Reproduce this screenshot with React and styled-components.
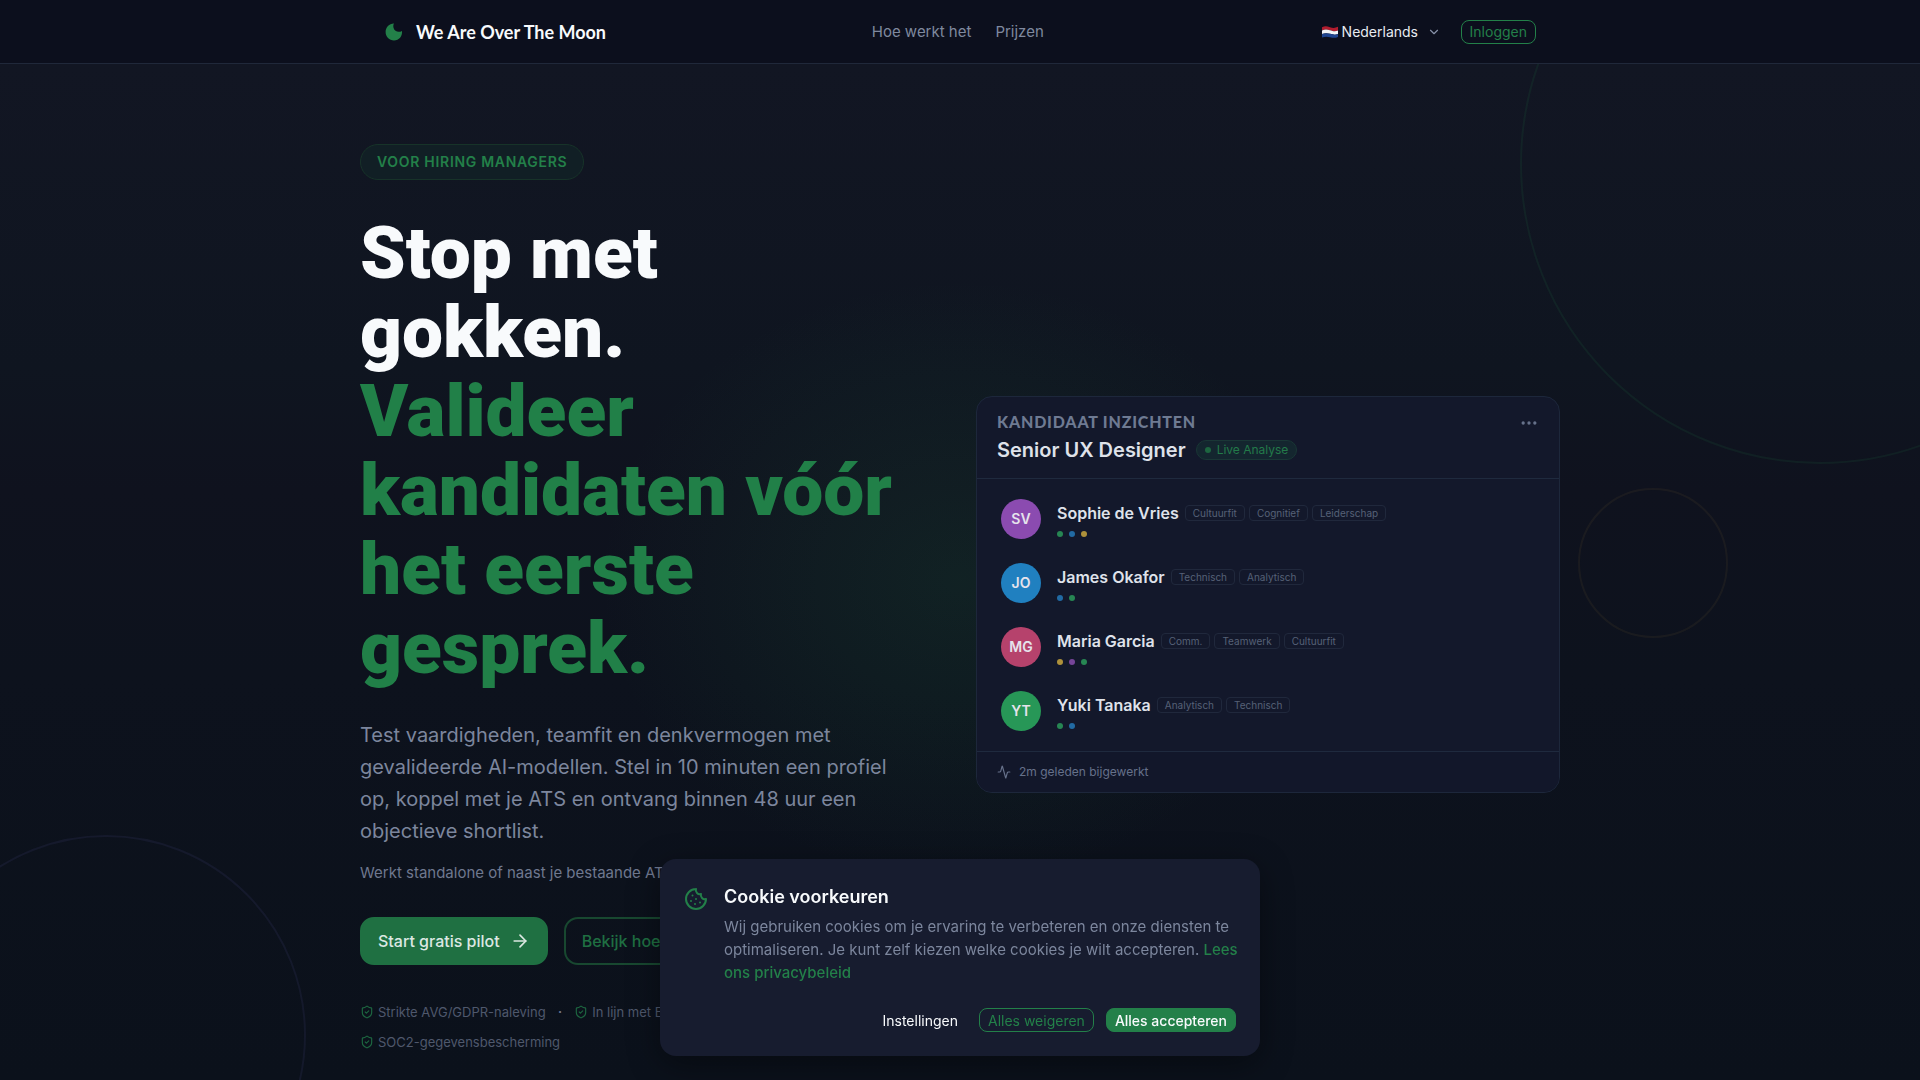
import React from 'react';
import styled, { createGlobalStyle } from 'styled-components';
import { Activity, ArrowRight, ChevronDown, Cookie, Ellipsis, ShieldCheck } from 'lucide-react';

const candidates = [
  {
    initials: 'SV',
    name: 'Sophie de Vries',
    color: '#8b4bb0',
    tags: ['Cultuurfit', 'Cognitief', 'Leiderschap'],
    dots: ['#278653', '#216aa3', '#ae913b'],
  },
  {
    initials: 'JO',
    name: 'James Okafor',
    color: '#2080c0',
    tags: ['Technisch', 'Analytisch'],
    dots: ['#216aa3', '#278653'],
  },
  {
    initials: 'MG',
    name: 'Maria Garcia',
    color: '#b6426c',
    tags: ['Comm.', 'Teamwerk', 'Cultuurfit'],
    dots: ['#ae913b', '#764599', '#278653'],
  },
  {
    initials: 'YT',
    name: 'Yuki Tanaka',
    color: '#279757',
    tags: ['Analytisch', 'Technisch'],
    dots: ['#278653', '#216aa3'],
  },
];

const App = () => {
  return (
    <>
      <GlobalStyle />
      <Header>
        <HeaderInner>
          <Brand href="#">
            <svg width="20" height="20" viewBox="0 0 20 20" aria-hidden="true">
              <path
                d="M10 1.6C9.2 3 9.1 4.700 9.700 6.200C10.500 9.300 14.500 11 18 8.900C18.700 13.900 15 18.400 10 18.400C5.300 18.400 1.600 14.700 1.600 10C1.600 5.300 5.300 1.500 10 1.600Z"
                fill="#238049"
              />
            </svg>
            We Are Over The Moon
          </Brand>
          <Nav>
            <NavLink href="#hoe">Hoe werkt het</NavLink>
            <NavLink href="#prijzen">Prijzen</NavLink>
          </Nav>
          <HeaderActions>
            <Language>
              <Flag />
              <LanguageSelect aria-label="Taal" defaultValue="nl">
                <option value="nl">Nederlands</option>
              </LanguageSelect>
              <ChevronDown size={14} color="#8791a8" />
            </Language>
            <SmallButton $variant="outline">Inloggen</SmallButton>
          </HeaderActions>
        </HeaderInner>
      </Header>

      <Hero>
        <Glow />
        <RingTop />
        <RingMiddle />
        <RingBottom />
        <HeroGrid>
          <Intro>
            <Badge>VOOR HIRING MANAGERS</Badge>
            <Title>
              Stop met
              <br />
              gokken.
              <Highlight>
                Valideer
                <br />
                kandidaten vóór
                <br />
                het eerste
                <br />
                gesprek.
              </Highlight>
            </Title>
            <Lead>
              Test vaardigheden, teamfit en denkvermogen met gevalideerde AI-modellen. Stel in 10
              minuten een profiel op, koppel met je ATS en ontvang binnen 48 uur een objectieve
              shortlist.
            </Lead>
            <Note>Werkt standalone of naast je bestaande ATS.</Note>
            <Actions>
              <BigButton $primary>
                Start gratis pilot
                <ArrowRight size={20} />
              </BigButton>
              <BigButton>Bekijk hoe het werkt</BigButton>
            </Actions>
            <TrustList>
              <TrustItem>
                <ShieldCheck size={14} color="#1d6640" />
                Strikte AVG/GDPR-naleving
              </TrustItem>
              <TrustDot>·</TrustDot>
              <TrustItem>
                <ShieldCheck size={14} color="#1d6640" />
                In lijn met EU AI Act
              </TrustItem>
              <TrustItem>
                <ShieldCheck size={14} color="#1d6640" />
                SOC2-gegevensbescherming
              </TrustItem>
            </TrustList>
          </Intro>

          <Card>
            <CardHeader>
              <div>
                <CardLabel>KANDIDAAT INZICHTEN</CardLabel>
                <CardTitleRow>
                  <CardTitle>Senior UX Designer</CardTitle>
                  <LivePill>
                    <Dot $color="#1d6640" />
                    Live Analyse
                  </LivePill>
                </CardTitleRow>
              </div>
              <MoreButton aria-label="Meer opties">
                <Ellipsis size={20} />
              </MoreButton>
            </CardHeader>
            <CandidateList>
              {candidates.map((c) => (
                <Candidate key={c.name}>
                  <Avatar $color={c.color}>{c.initials}</Avatar>
                  <div>
                    <NameRow>
                      <Name>{c.name}</Name>
                      {c.tags.map((tag) => (
                        <Tag key={tag}>{tag}</Tag>
                      ))}
                    </NameRow>
                    <Dots>
                      {c.dots.map((color) => (
                        <Dot key={color} $color={color} />
                      ))}
                    </Dots>
                  </div>
                </Candidate>
              ))}
            </CandidateList>
            <CardFooter>
              <Activity size={14} />
              2m geleden bijgewerkt
            </CardFooter>
          </Card>
        </HeroGrid>
      </Hero>

      <CookieDialog role="dialog" aria-labelledby="cookie-title">
        <CookieBody>
          <Cookie size={24} color="#238049" />
          <div>
            <CookieTitle id="cookie-title">Cookie voorkeuren</CookieTitle>
            <CookieText>
              Wij gebruiken cookies om je ervaring te verbeteren en onze diensten te optimaliseren.
              Je kunt zelf kiezen welke cookies je wilt accepteren.{' '}
              <CookieLink href="#privacy">Lees ons privacybeleid</CookieLink>
            </CookieText>
          </div>
        </CookieBody>
        <CookieActions>
          <SmallButton>Instellingen</SmallButton>
          <SmallButton $variant="outline">Alles weigeren</SmallButton>
          <SmallButton $variant="solid">Alles accepteren</SmallButton>
        </CookieActions>
      </CookieDialog>
    </>
  );
};

const Flag = () => (
  <svg width="16" height="12" viewBox="0 0 16 12" aria-hidden="true">
    <path d="M0 1.200C3-.3 5 .2 8 1.200S13 2.200 16 .8V4.400C13 5.800 11 5 8 4.200S3 3.200 0 4.400Z" fill="#b01c2e" />
    <path d="M0 4.400C3 3.200 5 3.400 8 4.200S13 5.800 16 4.400V8C13 9.200 11 8.600 8 7.800S3 7 0 8Z" fill="#f3f4f6" />
    <path d="M0 8C3 7 5 7 8 7.800S13 9.200 16 8V11C13 12.200 11 12 8 11.200S3 10.400 0 11.600Z" fill="#1f448f" />
  </svg>
);

const GlobalStyle = createGlobalStyle`
  * {
    box-sizing: border-box;
  }

  body {
    margin: 0;
    background: #0c121c;
    color: #f8fafc;
    font-family: Inter, "Liberation Sans", sans-serif;
    font-size: 16px;
  }

  button,
  select {
    font-family: inherit;
    cursor: pointer;
  }

  h1, h2, h3, p, ul {
    margin: 0;
    padding: 0;
  }
`;

const Header = styled.header`
  position: relative;
  z-index: 2;
  background: #0c0f1d;
  border-bottom: 1px solid #20283a;
`;

const HeaderInner = styled.div`
  max-width: 1200px;
  height: 63px;
  margin: 0 auto;
  padding: 0 24px;
  display: flex;
  align-items: center;
  justify-content: space-between;
`;

const Brand = styled.a`
  display: flex;
  align-items: center;
  gap: 12px;
  color: #f8fafc;
  font-family: Lato, sans-serif;
  font-size: 18px;
  font-weight: 700;
  text-decoration: none;
`;

const Nav = styled.nav`
  display: flex;
  gap: 24px;
`;

const NavLink = styled.a`
  color: #7f899f;
  font-size: 15px;
  text-decoration: none;
`;

const HeaderActions = styled.div`
  display: flex;
  align-items: center;
  gap: 20px;
`;

const Language = styled.label`
  display: flex;
  align-items: center;
  gap: 4px;
  padding-left: 12px;
`;

const LanguageSelect = styled.select`
  appearance: none;
  border: 0;
  padding: 0 4px 0 0;
  background: transparent;
  color: #e8ebf1;
  font-size: 14px;
`;

const variants = {
  outline: 'border-color: #238049; color: #238049;',
  solid: 'background: #238049; border-color: #238049; font-weight: 500;',
};

const SmallButton = styled.button`
  height: 24px;
  padding: 0 8px;
  border: 1px solid transparent;
  border-radius: 8px;
  background: transparent;
  color: #f8fafc;
  font-size: 14px;
  ${(props) => variants[props.$variant]}
`;

const Hero = styled.section`
  position: relative;
  overflow: hidden;
  min-height: calc(100vh - 64px);
  padding: 80px 24px 24px;
  background: linear-gradient(#121623, #0f1520 30%, #0f121e 42%, #0d121d 60%, #0b111b);
`;

const Glow = styled.div`
  position: absolute;
  top: 216px;
  left: calc(50% - 360px);
  width: 720px;
  height: 600px;
  background: radial-gradient(closest-side, rgba(35, 128, 73, 0.14), rgba(35, 128, 73, 0.09) 40%, transparent);
`;

const Ring = styled.div`
  position: absolute;
  border: 2px solid;
  border-radius: 50%;
`;

const RingTop = styled(Ring)`
  top: -200px;
  right: -200px;
  width: 600px;
  height: 600px;
  border-color: rgba(35, 128, 73, 0.12);
`;

const RingMiddle = styled(Ring)`
  top: 424px;
  right: 10%;
  width: 150px;
  height: 150px;
  border-color: rgba(174, 145, 59, 0.08);
`;

const RingBottom = styled(Ring)`
  bottom: -155px;
  left: -94px;
  width: 400px;
  height: 400px;
  border-color: rgba(80, 80, 140, 0.14);
`;

const HeroGrid = styled.div`
  position: relative;
  max-width: 1200px;
  margin: 0 auto;
  display: grid;
  grid-template-columns: 1fr 1fr;
  gap: 32px;
  align-items: center;
`;

const Intro = styled.div`
  display: flex;
  flex-direction: column;
  align-items: flex-start;
`;

const Badge = styled.span`
  padding: 0 16px;
  border: 1px solid #173329;
  border-radius: 18px;
  background: #111f25;
  color: #238049;
  font-size: 14px;
  font-weight: 600;
  line-height: 34px;
  letter-spacing: 0.05em;
`;

const Title = styled.h1`
  margin-top: 34px;
  font-family: Roboto, sans-serif;
  font-size: 73px;
  font-weight: 900;
  line-height: 79px;
`;

const Highlight = styled.span`
  display: block;
  color: #218048;
`;

const Lead = styled.p`
  max-width: 540px;
  margin-top: 31px;
  color: #7c869d;
  font-size: 20px;
  line-height: 32px;
`;

const Note = styled.p`
  margin-top: 14px;
  color: #6f788f;
  font-size: 15px;
  line-height: 24px;
`;

const Actions = styled.div`
  display: flex;
  gap: 16px;
  margin-top: 32px;
`;

const BigButton = styled.button`
  display: flex;
  align-items: center;
  gap: 10px;
  height: 48px;
  padding: 0 16px;
  border: 2px solid ${(props) => (props.$primary ? '#1f7042' : '#184830')};
  border-radius: 14px;
  background: ${(props) => (props.$primary ? '#1f7042' : 'transparent')};
  color: ${(props) => (props.$primary ? '#dce8e2' : '#1f6f42')};
  font-size: 16px;
  font-weight: 500;
`;

const TrustList = styled.div`
  display: flex;
  flex-wrap: wrap;
  gap: 10px 12px;
  max-width: 480px;
  margin-top: 37px;
`;

const TrustItem = styled.span`
  display: flex;
  align-items: center;
  gap: 4px;
  color: #4f586c;
  font-size: 13px;
  line-height: 20px;
`;

const TrustDot = styled.span`
  color: #6f788f;
  line-height: 20px;
`;

const Card = styled.div`
  overflow: hidden;
  margin-bottom: 8px;
  border: 1px solid #1d273b;
  border-radius: 16px;
  background: #13182b;
`;

const CardHeader = styled.div`
  display: flex;
  align-items: flex-start;
  justify-content: space-between;
  padding: 13px 20px 14px;
  border-bottom: 1px solid #1f2a3e;
`;

const CardLabel = styled.h3`
  color: #6e7a92;
  font-family: Lato, sans-serif;
  font-size: 16px;
  font-weight: 900;
  line-height: 24px;
  letter-spacing: 0.05em;
`;

const CardTitleRow = styled.div`
  display: flex;
  align-items: center;
  gap: 10px;
  margin-top: 2px;
`;

const CardTitle = styled.h2`
  color: #dfe2ea;
  font-size: 20px;
  font-weight: 600;
  line-height: 28px;
`;

const LivePill = styled.span`
  display: flex;
  align-items: center;
  gap: 6px;
  padding: 0 8px;
  border: 1px solid #1a3736;
  border-radius: 10px;
  background: #14262f;
  color: #237a4a;
  font-size: 12px;
  line-height: 18px;
`;

const MoreButton = styled.button`
  display: flex;
  padding: 3px 0;
  border: 0;
  background: transparent;
  color: #66718a;
`;

const CandidateList = styled.ul`
  padding: 8px;
  list-style: none;
`;

const Candidate = styled.li`
  display: flex;
  align-items: center;
  gap: 16px;
  padding: 12px 16px;
`;

const Avatar = styled.span`
  flex: none;
  width: 40px;
  height: 40px;
  border-radius: 50%;
  background: ${(props) => props.$color};
  color: #e6e3ec;
  font-size: 14px;
  font-weight: 600;
  line-height: 40px;
  text-align: center;
`;

const NameRow = styled.div`
  display: flex;
  align-items: center;
  gap: 4px;
`;

const Name = styled.span`
  margin-right: 2px;
  color: #dfe2ea;
  font-size: 16px;
  font-weight: 600;
  line-height: 24px;
`;

const Tag = styled.span`
  padding: 0 7px;
  border: 1px solid #20283c;
  border-radius: 4px;
  color: #566177;
  font-size: 10px;
  line-height: 14px;
`;

const Dots = styled.div`
  display: flex;
  gap: 6px;
  margin-top: 6px;
`;

const Dot = styled.span`
  width: 6px;
  height: 6px;
  border-radius: 50%;
  background: ${(props) => props.$color};
`;

const CardFooter = styled.div`
  display: flex;
  align-items: center;
  gap: 8px;
  padding: 10px 20px;
  border-top: 1px solid #1f2a3e;
  background: #12172a;
  color: #66718a;
  font-size: 12px;
  line-height: 20px;
`;

const CookieDialog = styled.section`
  position: fixed;
  z-index: 3;
  right: 0;
  bottom: 24px;
  left: 0;
  max-width: 600px;
  margin: 0 auto;
  padding: 24px 16px 24px 24px;
  border-radius: 16px;
  background: #171c2f;
  box-shadow: 0 8px 32px rgba(0, 0, 0, 0.4);
`;

const CookieBody = styled.div`
  display: flex;
  gap: 16px;

  > svg {
    flex: none;
    margin-top: 4px;
  }
`;

const CookieTitle = styled.h2`
  font-size: 18px;
  font-weight: 600;
  line-height: 28px;
`;

const CookieText = styled.p`
  margin-top: 4px;
  color: #7c869d;
  font-size: 15px;
  line-height: 23px;
`;

const CookieLink = styled.a`
  color: #238049;
  font-weight: 500;
  text-decoration: none;
`;

const CookieActions = styled.div`
  display: flex;
  justify-content: flex-end;
  gap: 12px;
  margin-top: 24px;
  padding-right: 8px;
`;

export default App;
